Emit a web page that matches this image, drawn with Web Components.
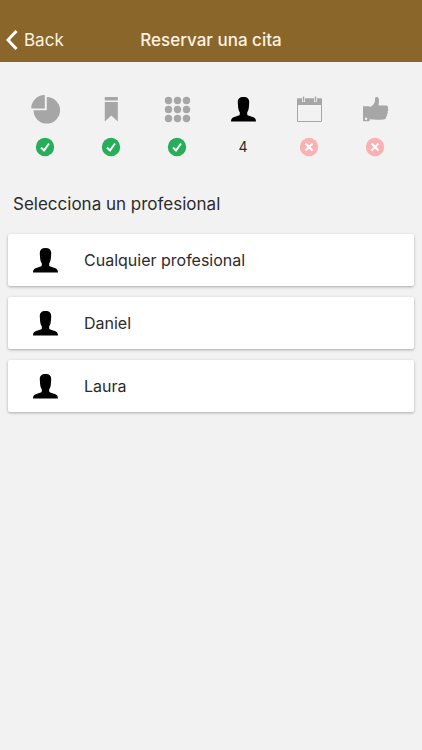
<!DOCTYPE html>
<html lang="es">
<head>
<meta charset="utf-8">
<meta name="viewport" content="width=device-width, initial-scale=1">
<title>Reservar una cita</title>
<style>
  body {
    margin: 0;
    min-height: 100vh;
    background-color: #f2f2f2;
    color: #2b2b2b;
    font-family: Inter, "Liberation Sans", sans-serif;
    font-size: 16px;
    line-height: 20px;
  }
</style>
</head>
<body>
<booking-page>
  <nav-bar back="Back">Reservar una cita</nav-bar>
  <step-list>
    <step-item icon="pie" status="done" label="Centro"></step-item>
    <step-item icon="bookmark" status="done" label="Servicio"></step-item>
    <step-item icon="grid" status="done" label="Opciones"></step-item>
    <step-item icon="person" status="current" label="Profesional">4</step-item>
    <step-item icon="calendar" status="pending" label="Fecha"></step-item>
    <step-item icon="thumb" status="pending" label="Confirmar"></step-item>
  </step-list>
  <section-title>Selecciona un profesional</section-title>
  <option-list>
    <option-card>Cualquier profesional</option-card>
    <option-card>Daniel</option-card>
    <option-card>Laura</option-card>
  </option-list>
</booking-page>

<script>
  // every icon is drawn on a 30x30 grid
  const icons = {
    pie: `<path d="M16.8 3a13.3 13.3 0 1 1-13.3 13.3h13.3z"/>
      <path d="M14.8 1v13.6H1.2A13.4 13.4 0 0 1 14.8 1z"/>`,
    bookmark: `<path d="M8.8 3h13v3.5h-13zM8.8 8h13v19.5l-6.5-6-6.5 6z"/>`,
    grid: [6.5, 15.5, 24.5].map((y) =>
      [6.5, 15.5, 24.5].map((x) => `<circle cx="${x}" cy="${y}" r="3.7"/>`).join('')
    ).join(''),
    person: `<path d="M15.5 3c-4 0-5.900 2-5.700 5.600l.3 4.400c.2 2.300.7 4 1.700 5.300v2.200c0 .8-1.300 1.200-3.300 1.700C4.700 23.200 3 24.400 3 27.500h25c0-3.100-1.700-4.300-5.500-5.300-2-.5-3.300-.9-3.300-1.700v-2.200c1-1.300 1.500-3 1.700-5.300l.3-4.400C21.400 5 19.500 3 15.500 3z"/>`,
    calendar: `<path d="M3 4.500h25V11H3z"/>
      <path d="M3.5 5h24v22.500h-24z" fill="none" stroke="currentColor"/>
      <path d="M9.5 3v5M21.500 3v5" stroke="#f2f2f2" stroke-width="3"/>
      <path d="M9.5 2.500v5M21.500 2.500v5" stroke="currentColor" stroke-width="1.4"/>`,
    thumb: `<path fill-rule="evenodd" d="M3 12.300h6.500v15H3zM6 23.500a1.300 1.300 0 1 0 0 2.600 1.300 1.300 0 0 0 0-2.600z"/>
      <path d="M9 13.300c3-.8 5-2.800 5.700-5 .4-1.300.3-2.700.4-4 .2-1.800 3.200-1.800 3.700.7.4 2.300.1 4.200-.3 6.500h7.500c1.800 0 2.500 1.500 1.900 3 .6 1 .4 2.200-.3 3 .4 1.100.1 2.200-.7 2.900.3 1.200-.1 2.100-.9 2.700.1 1.500-.8 2.300-2.300 2.400-5 .3-9.800.3-14.700-.2z"/>`,
  };

  const marks = {
    done: '<circle cx="10" cy="10" r="9.2" fill="#27ae5a"/><path stroke="#fff" d="M6 10.500l3 3 5-7"/>',
    pending: '<circle cx="10" cy="10" r="9.2" fill="#fbb1b1"/><path stroke="#fff" d="M6.500 6.500l7 7M13.500 6.500l-7 7"/>',
  };

  const icon = (name) =>
    `<svg class="icon" width="30" height="30" viewBox="0 0 30 30" fill="currentColor" aria-hidden="true">${icons[name]}</svg>`;

  class BookingPage extends HTMLElement {
    constructor() {
      super();
      this.attachShadow({ mode: 'open' }).innerHTML = `
      <style>
        :host { display: block; }
      </style>
      <slot></slot>`;
    }
  }

  class NavBar extends HTMLElement {
    connectedCallback() {
      this.attachShadow({ mode: 'open' }).innerHTML = `
      <style>
        :host { display: block; background-color: #8a662b; color: #fdf3e2; font-size: 17px; }
        header {
          display: grid;
          grid-template-columns: 1fr auto 1fr;
          align-items: center;
          padding: 24px 6px 6px;
          height: 32px;
        }
        button {
          display: flex;
          align-items: center;
          gap: 6px;
          justify-self: start;
          padding: 0;
          border: 0;
          background: none;
          color: inherit;
          font: inherit;
          cursor: pointer;
        }
        h1 { margin: 0; font-size: 17px; font-weight: 500; }
      </style>
      <header>
        <button type="button">
          <svg width="12" height="20" viewBox="0 0 12 20" fill="none" stroke="#fff" stroke-width="3" aria-hidden="true"><path d="M10.500 1L2 10l8.500 9"/></svg>
          <span>${this.getAttribute('back')}</span>
        </button>
        <h1><slot></slot></h1>
      </header>`;
    }
  }

  class StepList extends HTMLElement {
    constructor() {
      super();
      this.attachShadow({ mode: 'open' }).innerHTML = `
      <style>
        :host {
          display: grid;
          grid-template-columns: repeat(6, 1fr);
          padding: 32px 14px 0 12px;
        }
      </style>
      <slot></slot>`;
    }
  }

  class StepItem extends HTMLElement {
    connectedCallback() {
      const status = this.getAttribute('status');
      const mark = marks[status]
        ? `<svg width="20" height="20" viewBox="0 0 20 20" fill="none" stroke-width="2" aria-hidden="true">${marks[status]}</svg>`
        : '<slot></slot>';
      this.setAttribute('role', 'group');
      this.setAttribute('aria-label', this.getAttribute('label'));
      this.attachShadow({ mode: 'open' }).innerHTML = `
      <style>
        :host {
          display: flex;
          flex-direction: column;
          align-items: center;
          gap: 13px;
          color: #a6a6a6;
        }
        :host([status="current"]) .icon { color: #000; }
        .mark { height: 20px; color: #2b2b2b; font-size: 14px; }
        svg { display: block; }
      </style>
      ${icon(this.getAttribute('icon'))}
      <div class="mark">${mark}</div>`;
    }
  }

  class SectionTitle extends HTMLElement {
    constructor() {
      super();
      this.attachShadow({ mode: 'open' }).innerHTML = `
      <style>
        :host { display: block; padding: 37px 13px 20px; }
        h2 { margin: 0; font-size: 17px; font-weight: 400; }
      </style>
      <h2><slot></slot></h2>`;
    }
  }

  class OptionList extends HTMLElement {
    constructor() {
      super();
      this.attachShadow({ mode: 'open' }).innerHTML = `
      <style>
        :host {
          display: flex;
          flex-direction: column;
          gap: 11px;
          padding: 0 8px;
        }
      </style>
      <slot></slot>`;
    }
  }

  class OptionCard extends HTMLElement {
    constructor() {
      super();
      this.attachShadow({ mode: 'open' }).innerHTML = `
      <style>
        :host { display: block; }
        button {
          display: flex;
          align-items: center;
          gap: 24px;
          width: 100%;
          height: 52px;
          padding: 0 22px;
          border: 0;
          border-radius: 2px;
          background-color: #fff;
          box-shadow: 0 1px 3px rgba(0, 0, 0, 0.3);
          color: inherit;
          font: inherit;
          text-align: left;
          cursor: pointer;
        }
        .icon { color: #000; }
      </style>
      <button type="button">
        ${icon('person')}
        <span><slot></slot></span>
      </button>`;
    }
  }

  customElements.define('booking-page', BookingPage);
  customElements.define('nav-bar', NavBar);
  customElements.define('step-list', StepList);
  customElements.define('step-item', StepItem);
  customElements.define('section-title', SectionTitle);
  customElements.define('option-list', OptionList);
  customElements.define('option-card', OptionCard);
</script>
</body>
</html>
